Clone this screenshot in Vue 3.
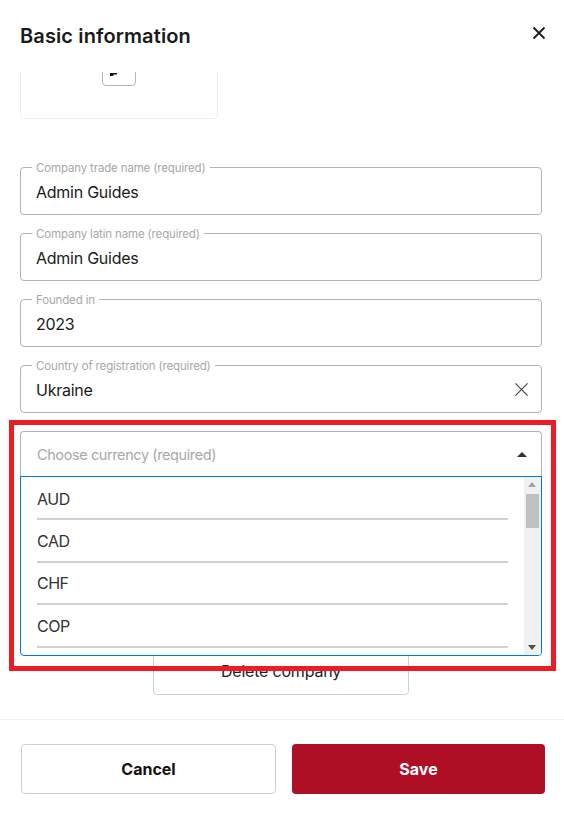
<script setup>
const fields = [
  { label: 'Company trade name (required)', value: 'Admin Guides' },
  { label: 'Company latin name (required)', value: 'Admin Guides' },
  { label: 'Founded in', value: '2023' },
  { label: 'Country of registration (required)', value: 'Ukraine', clearable: true },
]

const currencies = ['AUD', 'CAD', 'CHF', 'COP']
</script>

<template>
  <div class="modal">
    <header class="modal-header">
      <h2 class="modal-title">Basic information</h2>
      <button class="close-button" aria-label="Close">
        <svg width="14" height="14" viewBox="0 0 14 14">
          <path d="M1.5 1.5l11 11M12.5 1.5l-11 11" stroke="#1a1a1a" stroke-width="1.8" fill="none" />
        </svg>
      </button>
    </header>

    <div class="modal-body">
      <div class="upload-card">
        <div class="upload-button">
          <svg class="upload-glyph" width="7" height="3" viewBox="0 0 7 3">
            <path d="M0 0h7v1.5H4L3 3H0z" fill="#111" />
          </svg>
        </div>
      </div>

      <div class="fields">
        <fieldset v-for="field in fields" :key="field.label" class="field">
          <legend class="field-label">{{ field.label }}</legend>
          <span class="field-value">{{ field.value }}</span>
          <svg v-if="field.clearable" class="clear-icon" width="16" height="16" viewBox="0 0 16 16">
            <path d="M1.5 1.5l13 13M14.5 1.5l-13 13" stroke="#444" stroke-width="1.2" fill="none" />
          </svg>
        </fieldset>

        <div class="select">
          <div class="dropdown">
            <div class="select-head">
              <span class="select-placeholder">Choose currency (required)</span>
              <span class="select-arrow"></span>
            </div>
            <div class="select-menu">
              <ul class="options">
                <li v-for="code in currencies" :key="code" class="option">
                  <span>{{ code }}</span>
                </li>
              </ul>
              <div class="scrollbar">
                <span class="scroll-up"></span>
                <span class="scroll-thumb"></span>
                <span class="scroll-down"></span>
              </div>
            </div>
          </div>
        </div>
      </div>

      <button class="delete-button">Delete company</button>
    </div>

    <footer class="modal-footer">
      <button class="btn btn-cancel">Cancel</button>
      <button class="btn btn-save">Save</button>
    </footer>

    <div class="highlight"></div>
  </div>
</template>

<style>
html,
body {
  margin: 0;
  background: #fff;
}
</style>

<style scoped>
.modal {
  position: relative;
  width: 564px;
  height: 818px;
  display: flex;
  flex-direction: column;
  background: #fff;
  font-family: Inter, "Noto Sans", sans-serif;
  color: #1a1a1a;
  overflow: hidden;
}

.modal-header {
  height: 72px;
  flex: none;
  box-sizing: border-box;
  padding: 24px 17px 0 20px;
  display: flex;
  justify-content: space-between;
  align-items: flex-start;
}

.modal-title {
  margin: 0;
  font-size: 20px;
  line-height: 24px;
  font-weight: 600;
  letter-spacing: 0.12px;
  color: #1a1a1a;
}

.close-button {
  width: 16px;
  height: 16px;
  margin-top: 1px;
  padding: 1px;
  border: none;
  background: none;
  display: flex;
}

.modal-body {
  flex: 1;
  min-height: 0;
  padding: 0 22px 0 20px;
  display: flex;
  flex-direction: column;
  overflow: hidden;
}

.upload-card {
  flex: none;
  box-sizing: border-box;
  width: 198px;
  height: 120px;
  margin-top: -73px;
  padding-bottom: 32px;
  border: 1px solid #eeeeee;
  border-radius: 4px;
  display: flex;
  justify-content: center;
  align-items: flex-end;
}

.upload-button {
  box-sizing: border-box;
  width: 34px;
  height: 34px;
  border: 1px solid #b5b5b5;
  border-radius: 4px;
  position: relative;
}

.upload-glyph {
  position: absolute;
  left: 7px;
  bottom: 9px;
}

.fields {
  margin-top: 41px;
  display: flex;
  flex-direction: column;
  gap: 11px;
}

.field {
  position: relative;
  box-sizing: border-box;
  height: 55px;
  margin: 0;
  padding: 0 15px;
  border: 1px solid #b3b3b3;
  border-radius: 4px;
  min-width: 0;
}

.field-label {
  height: 14px;
  margin-left: -4px;
  padding: 0 4px;
  font-size: 11.5px;
  line-height: 16px;
  letter-spacing: -0.15px;
  color: #a8a8a8;
}

.field-value {
  display: block;
  margin-top: 6px;
  font-size: 16px;
  line-height: 24px;
  letter-spacing: -0.25px;
  color: #1a1a1a;
}

.clear-icon {
  position: absolute;
  right: 12px;
  top: 10px;
  width: 15px;
  height: 15px;
}

.select {
  position: relative;
  height: 48px;
  margin-top: 7px;
}

.dropdown {
  position: absolute;
  top: 0;
  left: 0;
  right: 0;
  z-index: 2;
  background: #fff;
}

.select-head {
  box-sizing: border-box;
  height: 46px;
  padding: 0 14px 0 16px;
  border: 1px solid #b3b3b3;
  border-bottom: none;
  border-radius: 4px 4px 0 0;
  display: flex;
  justify-content: space-between;
  align-items: center;
}

.select-placeholder {
  font-size: 14.5px;
  letter-spacing: -0.4px;
  color: #a8a8a8;
}

.select-arrow {
  width: 0;
  height: 0;
  border-left: 5px solid transparent;
  border-right: 5px solid transparent;
  border-bottom: 5px solid #333;
}

.select-menu {
  box-sizing: border-box;
  height: 180px;
  margin-top: -1px;
  border: 1px solid #0078d4;
  border-radius: 0 0 4px 4px;
  display: flex;
  overflow: hidden;
}

.options {
  flex: 1;
  margin: 0;
  padding: 1px 16px 0;
  list-style: none;
  min-width: 0;
}

.option {
  box-sizing: border-box;
  height: 42.4px;
  padding-top: 8.5px;
  border-bottom: 2px solid #d0d0d0;
  font-size: 16px;
  line-height: 24px;
  letter-spacing: -0.5px;
  color: #333;
}

.scrollbar {
  flex: none;
  width: 17px;
  background: #f1f1f1;
  position: relative;
}

.scroll-up,
.scroll-down {
  position: absolute;
  left: 4px;
  width: 0;
  height: 0;
  border-left: 4px solid transparent;
  border-right: 4px solid transparent;
}

.scroll-up {
  top: 5px;
  border-bottom: 5px solid #a3a3a3;
}

.scroll-down {
  bottom: 5px;
  border-top: 5px solid #505050;
}

.scroll-thumb {
  position: absolute;
  top: 17px;
  left: 2px;
  width: 13px;
  height: 34px;
  background: #c1c1c1;
}

.delete-button {
  flex: none;
  box-sizing: border-box;
  align-self: center;
  width: 256px;
  height: 48px;
  margin-top: 168px;
  border: 1px solid #d0d0d0;
  border-radius: 4px;
  background: #fff;
  font-family: inherit;
  font-size: 16px;
  letter-spacing: -0.2px;
  color: #222;
}

.modal-footer {
  flex: none;
  box-sizing: border-box;
  height: 99px;
  padding: 24px 19px 24px 21px;
  border-top: 1px solid #efefef;
  display: flex;
  gap: 16px;
}

.btn {
  height: 50px;
  box-sizing: border-box;
  border-radius: 4px;
  font-family: inherit;
  font-size: 16px;
  font-weight: 700;
}

.btn-cancel {
  width: 255px;
  border: 1px solid #d0d0d0;
  background: #fff;
  color: #111;
}

.btn-save {
  width: 253px;
  border: none;
  background: #ae0f24;
  color: #fff;
}

.highlight {
  position: absolute;
  top: 420px;
  left: 9px;
  width: 547px;
  height: 251px;
  box-sizing: border-box;
  border: 5px solid #ed1c24;
  pointer-events: none;
  z-index: 3;
}
</style>
